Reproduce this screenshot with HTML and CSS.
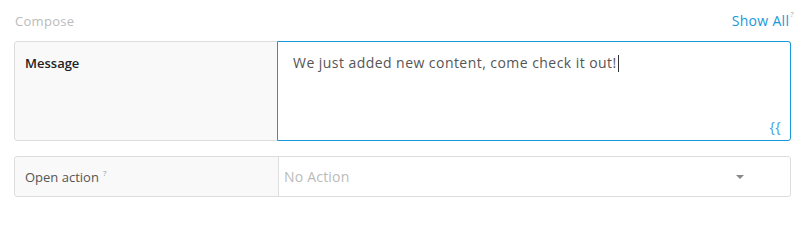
FILE: index.html
```html
<!DOCTYPE html>
<html>
<head>
<meta charset="utf-8">
<link rel="stylesheet" href="styles.css">
</head>
<body>
<div class="page">
  <div class="head">
    <span class="title">Compose</span>
    <a class="show">Show All<sup class="q">?</sup></a>
  </div>
  <div class="card msg">
    <div class="label strong">Message</div>
    <div class="editor">
      <div class="text">We just added new content, come check it out!<span class="caret"></span></div>
      <div class="braces">{{</div>
    </div>
  </div>
  <div class="card action">
    <div class="label">Open action <sup class="q grey">?</sup></div>
    <div class="select">
      <span class="ph">No Action</span>
      <span class="arrow"></span>
    </div>
  </div>
</div>
</body>
</html>
```
FILE: styles.css
```css
html, body { margin: 0; padding: 0; background: #fff; }
body { font-family: "Open Sans", "Liberation Sans", sans-serif; font-size: 13px; }
.page { padding: 0 17px 0 14px; }
.head { display: flex; justify-content: space-between; align-items: center; height: 41px; padding-left: 1px; }
.title { color: #bbb; font-size: 13px; letter-spacing: 0.3px; }
.show { color: #1a98dc; font-size: 14px; letter-spacing: 0.3px; margin-right: -3px; }
.q { font-size: 8px; vertical-align: top; position: relative; top: -3px; color: #aaa; margin-left: 1px; }
.card { display: flex; border: 1px solid #ddd; border-radius: 3px; background: #f9f9f9; }
.msg { height: 98px; }
.label { width: 252px; padding: 12px 0 0 10px; color: #555; }
.strong { color: #222; font-weight: 600; }
.editor { flex: 1; background: #fff; border: 1px solid #1a98dc; margin: -1px -1px -1px 0; border-radius: 0 3px 3px 0; display: flex; flex-direction: column; justify-content: space-between; padding: 11px 9px 4px 15px; }
.text { color: #555; font-size: 14px; letter-spacing: 0.45px; line-height: 19px; }
.caret { display: inline-block; width: 1px; height: 17px; background: #333; vertical-align: -4px; margin-left: 1px; }
.braces { align-self: flex-end; color: #3aa2df; font-size: 14px; line-height: 18px; letter-spacing: 0.5px; }
.action { margin-top: 15px; height: 39px; }
.action .label { width: 253px; padding: 0 0 0 10px; display: flex; align-items: center; border-right: 1px solid #ddd; }
.grey { top: -4px; margin-left: 4px; color: #999; }
.select { flex: 1; background: #fff; display: flex; align-items: center; justify-content: space-between; padding: 0 46px 0 5px; border-radius: 0 3px 3px 0; }
.ph { color: #bbb; font-size: 14px; letter-spacing: 0.2px; }
.arrow { width: 0; height: 0; border-left: 4px solid transparent; border-right: 4px solid transparent; border-top: 4px solid #888; }
```
